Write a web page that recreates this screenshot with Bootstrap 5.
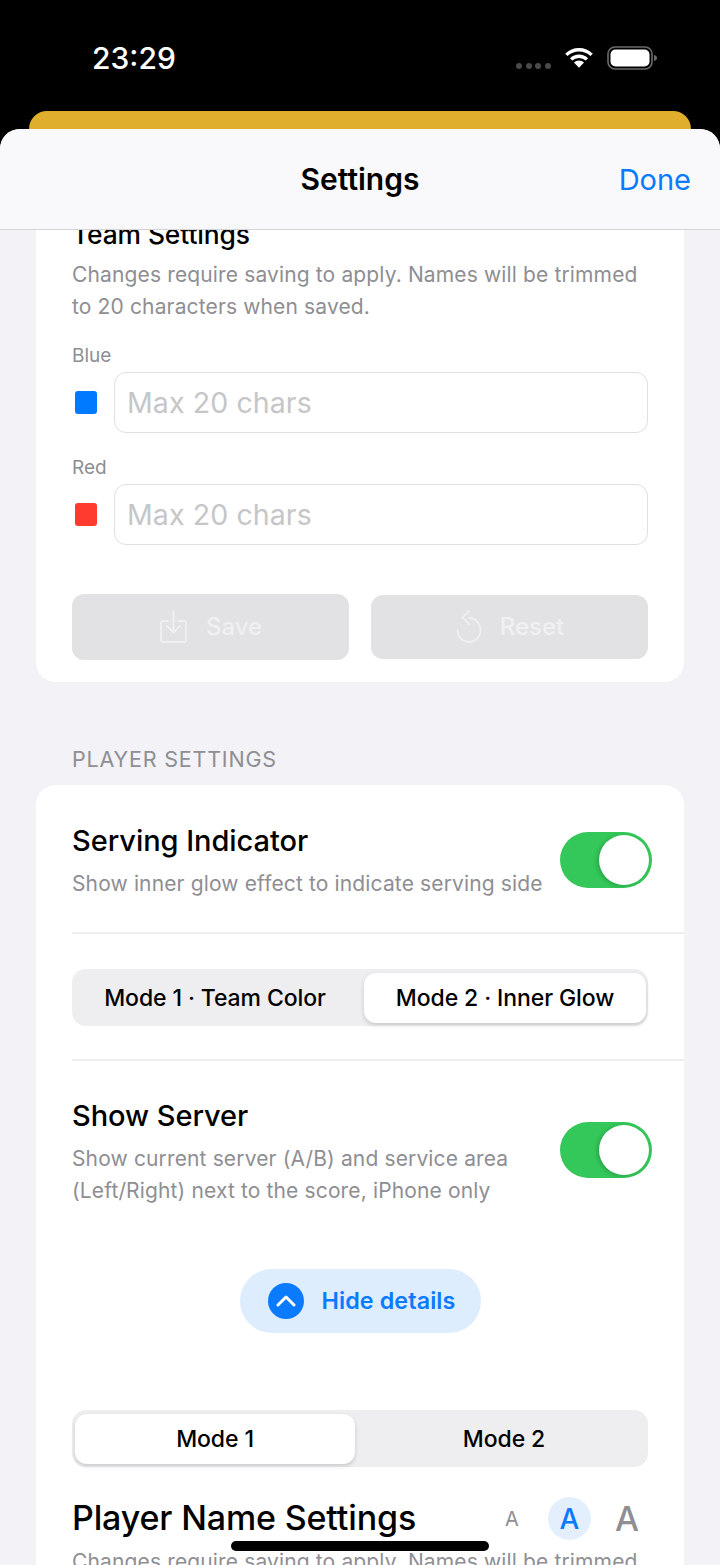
<!DOCTYPE html>
<html lang="en">
<head>
<meta charset="utf-8">
<title>Settings</title>
<link href="https://cdn.jsdelivr.net/npm/bootstrap@5.3.0/dist/css/bootstrap.min.css" rel="stylesheet">
<style>
html,body{margin:0;height:1565px;background:#000;overflow:hidden}
body{font-family:Inter,"Liberation Sans",sans-serif;color:#000;position:relative}
.status-row{height:111px;padding:0 63px 0 92px;color:#fff}
.clock{font-size:30px;font-weight:500;line-height:35px;margin-top:41px}
.status-icons{margin-top:46px;gap:13px}
.dots{gap:3.6px;margin-top:17px}
.dots i{width:6px;height:6px;border-radius:50%;background:#4a4a4a;display:block}
.peek{height:18px;margin:0 29px;background:#e0ae2d;border-radius:20px 20px 0 0}
.sheet{height:1436px;background:#f2f2f7;border-radius:20px 20px 0 0;overflow:hidden;position:relative}
.sheet-nav{height:101px;background:#f9f9fb;border-bottom:1px solid #d4d4d6;position:relative;z-index:2;padding:0 29px}
.sheet-title{font-size:30px;font-weight:600;line-height:1}
.done{font-size:29px;color:#0a7aff;background:none;border:0;padding:0;line-height:1}
.panel{background:#fff;margin:0 36px;padding:0 36px;border-radius:0 0 20px 20px;display:flow-root}
.panel.open{height:452px}
.panel.second{border-radius:20px 20px 0 0;padding-right:0;height:800px}
.team-title{font-size:26.4px;font-weight:500;line-height:32px;margin:-12px 0 0;letter-spacing:-.1px}
.hint{font-size:21px;line-height:32px;color:#8e8e93;letter-spacing:.14px;margin:0}
.hint.first{margin-top:9px}
.field-label{font-size:19px;line-height:22px;color:#8e8e93;margin:0 0 5px}
.field-row{gap:17px;align-items:center}
.swatch{width:22px;height:23px;border-radius:3px;margin-left:3px;flex:none}
.field-input{height:61px;font-size:28.500px;border:1px solid #dfdfe2;border-radius:12px;padding:0 12px;flex:1;color:#000;outline:0;font-family:inherit;min-width:0;letter-spacing:.1px}
.field-input::placeholder{color:#c6c6c8;opacity:1}
.group-blue{margin-top:22px}
.group-red{margin-top:24px}
.action-row{gap:22px;margin-top:49px;align-items:center}
.action.btn,.action.btn:disabled{flex:1;background:#e2e2e4;border:0;border-radius:12px;color:#f0f0f2;font-size:24px;font-weight:500;gap:17px;opacity:1}
.action.save{height:66px}
.action.reset{height:64px}
.section-label{font-size:21.5px;line-height:26px;color:#8e8e93;margin:64px 0 13px 72px;letter-spacing:.8px}
.row-title{font-size:29px;font-weight:500;line-height:36px;margin:0;letter-spacing:-.05px}
.pref-row{padding-right:32px}
.switch-pill{width:92px;height:56px;border-radius:28px;background:#34c759;flex:none;position:relative}
.switch-pill::after{content:"";position:absolute;right:3px;top:3px;width:50px;height:50px;border-radius:50%;background:#fff;box-shadow:-2px 1px 4px rgba(0,0,0,.18)}
.rule{height:2px;background:#eeeeef}
.seg{display:flex;background:#eeeef0;border-radius:14px;padding:4px 2px 3px 0;margin-right:36px}
.seg.left{padding:4px 0 3px 3px}
.seg-item{flex:1;border:0;background:none;font-size:23px;font-weight:500;height:50px;border-radius:12px;color:#000;padding:1px 0 0;letter-spacing:-.1px;font-family:inherit}
.seg-item.on{background:#fff;box-shadow:0 2px 4px rgba(0,0,0,.16);flex:0 0 282px}
.seg.left .seg-item.on{flex:0 0 280px}
.seg-item.pad-end{padding-right:6px}
.seg-item.pad-start{padding-left:5px}
.more-pill{width:241px;height:64px;border-radius:32px;background:#deedfd;color:#0a7aff;border:0;font-size:23.3px;font-weight:600;gap:18px;padding:0 0 0 3px;letter-spacing:.1px;font-family:inherit}
.more-dot{width:36px;height:36px;border-radius:50%;background:#0a7aff;flex:none}
.heading-lg{font-size:34px;font-weight:500;line-height:42px;margin:0 0 2px;letter-spacing:-.15px}
.sz{color:#8e8e93;line-height:1}
.sz.s{font-size:20px;width:24px;text-align:center}
.sz.m{font-size:28px;font-weight:500;color:#0a7aff;width:43px;height:43px;border-radius:50%;background:#e3effc}
.sz.l{font-size:34px;font-weight:500;width:24px;text-align:center}
.home-bar{position:absolute;left:231px;top:1541px;width:258px;height:10px;border-radius:5px;background:#000;z-index:5}
.size-group{gap:24px}
.serving{padding-top:38px;height:147px}
.server{padding-top:37px}
</style>
</head>
<body>
<div class="status-row d-flex justify-content-between">
  <div class="clock">23:29</div>
  <div class="status-icons d-flex align-items-start">
    <div class="dots d-flex"><i></i><i></i><i></i><i></i></div>
    <svg width="30" height="23" viewBox="0 0 32 24" aria-hidden="true"><path d="M2.5 9.2a19.5 19.5 0 0 1 27 0" fill="none" stroke="#fff" stroke-width="3.6"/><path d="M7.6 14a12.4 12.4 0 0 1 16.8 0" fill="none" stroke="#fff" stroke-width="3.6"/><path d="M16 23l-5.4-5.6a7.6 7.6 0 0 1 10.8 0z" fill="#fff"/></svg>
    <svg width="50" height="24" viewBox="0 0 50 24" aria-hidden="true"><rect x="1" y="1" width="44" height="22" rx="7" fill="none" stroke="#6b6b6b" stroke-width="1.6"/><rect x="3.500" y="3.500" width="39" height="17" rx="5" fill="#fff"/><path d="M47 9c2 .4 3 1.6 3 3s-1 2.600-3 3z" fill="#6b6b6b"/></svg>
  </div>
</div>
<div class="peek"></div>
<div class="sheet">
  <div class="sheet-nav d-flex align-items-center justify-content-end position-relative">
    <div class="sheet-title position-absolute top-50 start-50 translate-middle">Settings</div>
    <button class="done" type="button">Done</button>
  </div>
  <div class="panel open">
    <h2 class="team-title text-nowrap">Team Settings</h2>
    <p class="hint first text-nowrap">Changes require saving to apply. Names will be trimmed<br>to 20 characters when saved.</p>
    <div class="group-blue">
      <p class="field-label">Blue</p>
      <div class="field-row d-flex"><span class="swatch" style="background:#007aff"></span><input class="field-input" placeholder="Max 20 chars"></div>
    </div>
    <div class="group-red">
      <p class="field-label">Red</p>
      <div class="field-row d-flex"><span class="swatch" style="background:#ff3b30"></span><input class="field-input" placeholder="Max 20 chars"></div>
    </div>
    <div class="action-row d-flex">
      <button class="action save btn d-flex align-items-center justify-content-center" type="button" disabled>
        <svg width="30" height="34" viewBox="0 0 30 34" fill="none" stroke="#f0f0f2" stroke-width="1.8" stroke-linecap="round" stroke-linejoin="round" aria-hidden="true"><path d="M9 11H4a2 2 0 0 0-2 2v17a2 2 0 0 0 2 2h21a2 2 0 0 0 2-2V13a2 2 0 0 0-2-2h-5"/><path d="M14.500 1v21M8 16l6.500 6.500L21 16"/></svg>
        <span>Save</span>
      </button>
      <button class="action reset btn d-flex align-items-center justify-content-center" type="button" disabled>
        <svg width="28" height="34" viewBox="0 0 28 34" fill="none" stroke="#f0f0f2" stroke-width="1.8" stroke-linecap="round" stroke-linejoin="round" aria-hidden="true"><path d="M14 8a11.500 12 0 1 1-11.500 12"/><path d="M14 1L7.500 7.500 14 14"/></svg>
        <span>Reset</span>
      </button>
    </div>
  </div>
  <div class="section-label">PLAYER SETTINGS</div>
  <div class="panel second">
    <div class="pref-row serving d-flex justify-content-between align-items-start">
      <div>
        <h3 class="row-title">Serving Indicator</h3>
        <p class="hint text-nowrap" style="margin-top:9px">Show inner glow effect to indicate serving side</p>
      </div>
      <div class="switch-pill" style="margin-top:9px"></div>
    </div>
    <div class="rule"></div>
    <div class="seg" style="margin-top:35px;height:57px">
      <button class="seg-item pad-end" type="button">Mode 1 · Team Color</button>
      <button class="seg-item on" type="button">Mode 2 · Inner Glow</button>
    </div>
    <div class="rule" style="margin-top:33px"></div>
    <div class="pref-row server d-flex justify-content-between align-items-start">
      <div>
        <h3 class="row-title">Show Server</h3>
        <p class="hint" style="margin-top:9px">Show current server (A/B) and service area<br>(Left/Right) next to the score, iPhone only</p>
      </div>
      <div class="switch-pill" style="margin-top:24px"></div>
    </div>
    <div class="d-flex justify-content-center" style="margin:62px 36px 0 0">
      <button class="more-pill d-flex align-items-center justify-content-center" type="button">
        <span class="more-dot d-flex align-items-center justify-content-center"><svg width="20" height="12" viewBox="0 0 20 12" fill="none" stroke="#fff" stroke-width="3" stroke-linecap="round" stroke-linejoin="round" aria-hidden="true"><path d="M2 10l8-8 8 8"/></svg></span>
        <span>Hide details</span>
      </button>
    </div>
    <div class="seg left" style="margin-top:77px;height:57px">
      <button class="seg-item on" type="button">Mode 1</button>
      <button class="seg-item pad-start" type="button">Mode 2</button>
    </div>
    <div class="d-flex justify-content-between align-items-center" style="margin-top:30px;padding-right:45px;height:43px">
      <h3 class="heading-lg text-nowrap">Player Name Settings</h3>
      <div class="size-group d-flex align-items-center">
        <span class="sz s">A</span>
        <span class="sz m d-flex align-items-center justify-content-center">A</span>
        <span class="sz l">A</span>
      </div>
    </div>
    <p class="hint text-nowrap" style="margin-top:6px">Changes require saving to apply. Names will be trimmed</p>
  </div>
</div>
<div class="home-bar"></div>
<script src="https://cdn.jsdelivr.net/npm/bootstrap@5.3.0/dist/js/bootstrap.bundle.min.js"></script>
</body>
</html>
